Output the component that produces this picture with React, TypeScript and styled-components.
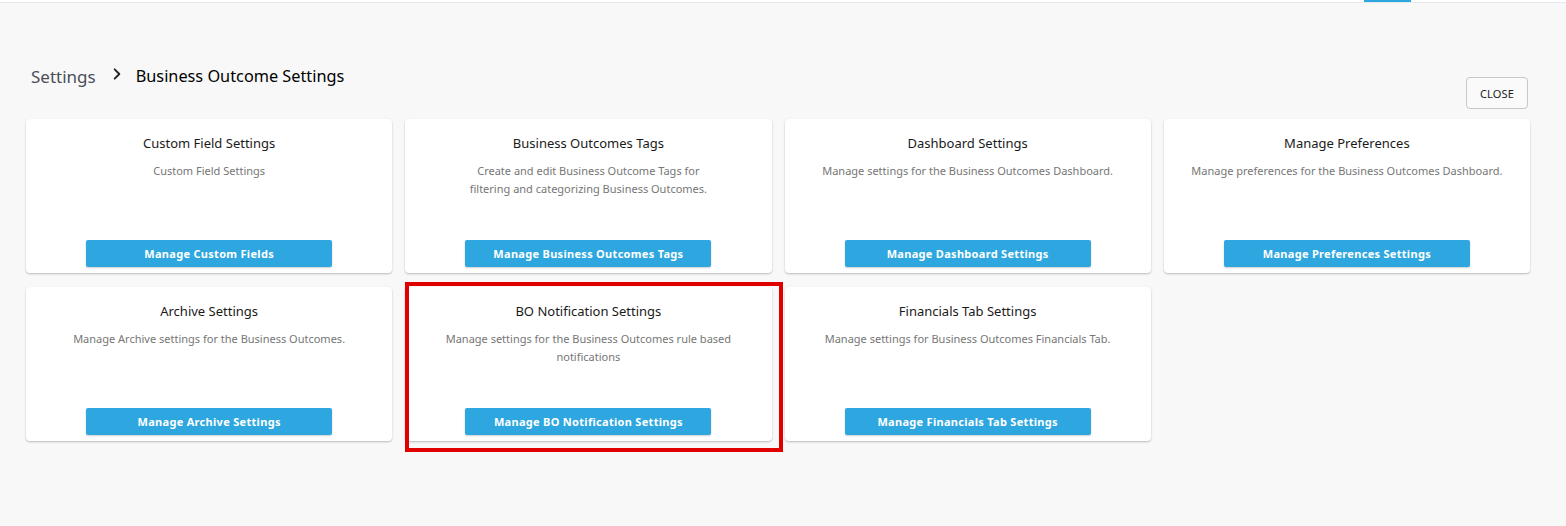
import React from 'react'
import styled, { createGlobalStyle } from 'styled-components'

const GlobalStyle = createGlobalStyle`
  html, body {
    margin: 0;
    padding: 0;
    background: #f8f8f9;
    font-family: 'Noto Sans', 'Open Sans', sans-serif;
  }
`

const Page = styled.div`
  width: 1566px;
  height: 526px;
  background: #f8f8f9;
  overflow: hidden;
`

const TopStrip = styled.div`
  height: 2px;
  border-bottom: 1px solid #e6e8ec;
  background: #fff;
  display: flex;
  justify-content: flex-end;
  padding-right: 155px;
`

const TabIndicator = styled.div`
  width: 47px;
  height: 2px;
  background: #2ea7e0;
`

const Content = styled.div`
  padding: 58px 36px 0 26px;
`

const Header = styled.div`
  display: flex;
  justify-content: space-between;
  align-items: flex-start;
  height: 48px;
  margin-bottom: 10px;
`

const Breadcrumb = styled.div`
  display: flex;
  align-items: center;
  height: 30px;
  padding-left: 5px;
  font-size: 17px;
`

const Crumb = styled.span<{ $current?: boolean }>`
  color: ${(p) => (p.$current ? '#000' : '#4a4f57')};
  font-size: ${(p) => (p.$current ? '16.3px' : '17px')};
`

const Chevron = styled.svg`
  width: 14px;
  height: 14px;
  margin: 0 12px 4px 14px;
`

const CloseButton = styled.button`
  margin-top: 16px;
  margin-right: 2px;
  width: 62px;
  height: 32px;
  border: 1px solid #c8c8c8;
  border-radius: 4px;
  background: #fafafa;
  font-family: inherit;
  font-size: 11px;
  color: #222;
  letter-spacing: 0.2px;
`

const Grid = styled.div`
  display: grid;
  grid-template-columns: repeat(4, 1fr);
  column-gap: 13px;
  row-gap: 14px;
`

const Card = styled.div<{ $highlight?: boolean }>`
  position: relative;
  height: 154px;
  background: #fff;
  border-radius: 4px;
  box-shadow: 0 1px 2px rgba(0, 0, 0, 0.25);
  display: flex;
  flex-direction: column;
  align-items: center;
  padding: 15px 22px 6px;
  box-sizing: border-box;
  text-align: center;

  ${(p) =>
    p.$highlight &&
    `
    &::after {
      content: '';
      position: absolute;
      top: -5px;
      left: 0;
      right: -11px;
      bottom: -11px;
      border: 4px solid #e10000;
      pointer-events: none;
    }
  `}
`

const Title = styled.div`
  font-size: 13px;
  line-height: 18px;
  color: #1a1a1a;
`

const Description = styled.div`
  margin-top: 10px;
  font-size: 11px;
  line-height: 18px;
  color: #767676;
`

const ActionButton = styled.button`
  margin-top: auto;
  width: 246px;
  height: 27px;
  border: none;
  border-radius: 2px;
  background: #2ea7e0;
  color: #fff;
  font-family: inherit;
  font-size: 11px;
  font-weight: 700;
  letter-spacing: 0.3px;
  box-shadow: 0 1px 2px rgba(0, 0, 0, 0.2);
`

interface Setting {
  title: string
  description: React.ReactNode
  action: string
  highlight?: boolean
}

const settings: Setting[] = [
  {
    title: 'Custom Field Settings',
    description: 'Custom Field Settings',
    action: 'Manage Custom Fields',
  },
  {
    title: 'Business Outcomes Tags',
    description: (
      <>
        Create and edit Business Outcome Tags for
        <br />
        filtering and categorizing Business Outcomes.
      </>
    ),
    action: 'Manage Business Outcomes Tags',
  },
  {
    title: 'Dashboard Settings',
    description: 'Manage settings for the Business Outcomes Dashboard.',
    action: 'Manage Dashboard Settings',
  },
  {
    title: 'Manage Preferences',
    description: 'Manage preferences for the Business Outcomes Dashboard.',
    action: 'Manage Preferences Settings',
  },
  {
    title: 'Archive Settings',
    description: 'Manage Archive settings for the Business Outcomes.',
    action: 'Manage Archive Settings',
  },
  {
    title: 'BO Notification Settings',
    description: 'Manage settings for the Business Outcomes rule based notifications',
    action: 'Manage BO Notification Settings',
    highlight: true,
  },
  {
    title: 'Financials Tab Settings',
    description: 'Manage settings for Business Outcomes Financials Tab.',
    action: 'Manage Financials Tab Settings',
  },
]

export default function App() {
  return (
    <Page>
      <GlobalStyle />
      <TopStrip>
        <TabIndicator />
      </TopStrip>
      <Content>
        <Header>
          <Breadcrumb>
            <Crumb>Settings</Crumb>
            <Chevron viewBox="0 0 24 24" fill="none" stroke="#222" strokeWidth="3.2" strokeLinecap="round" strokeLinejoin="round">
              <path d="M8 4l8 8-8 8" />
            </Chevron>
            <Crumb $current>Business Outcome Settings</Crumb>
          </Breadcrumb>
          <CloseButton>CLOSE</CloseButton>
        </Header>
        <Grid>
          {settings.map((s) => (
            <Card key={s.title} $highlight={s.highlight}>
              <Title>{s.title}</Title>
              <Description>{s.description}</Description>
              <ActionButton>{s.action}</ActionButton>
            </Card>
          ))}
        </Grid>
      </Content>
    </Page>
  )
}
